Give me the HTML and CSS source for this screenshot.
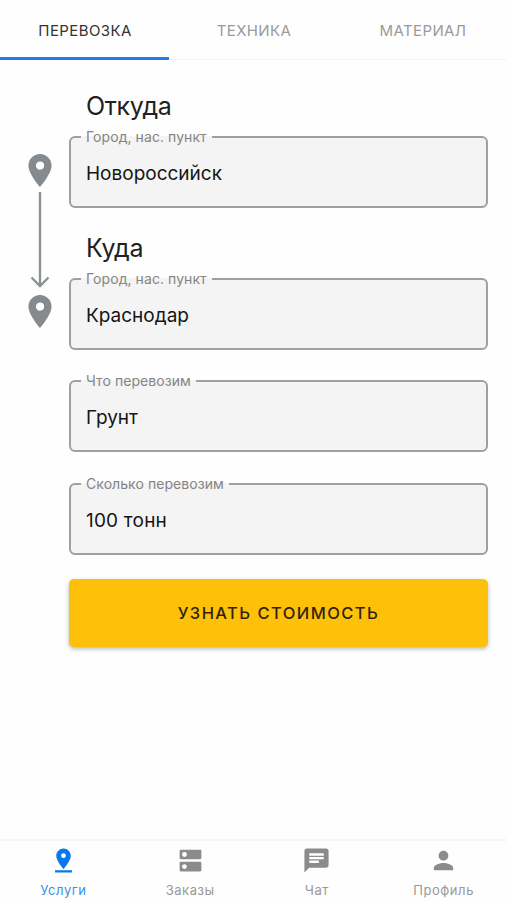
FILE: index.html
```html
<!DOCTYPE html>
<html lang="ru">
<head>
<meta charset="utf-8">
<title>Перевозка</title>
<link rel="stylesheet" href="styles.css">
</head>
<body>
<nav class="tabs">
  <a class="tab tab-active">ПЕРЕВОЗКА</a>
  <a class="tab">ТЕХНИКА</a>
  <a class="tab">МАТЕРИАЛ</a>
</nav>
<main class="content">
  <div class="rail">
    <svg class="pin" viewBox="5 2 14 20"><path fill-rule="evenodd" d="M12 2C8.13 2 5 5.13 5 9c0 5.25 7 13 7 13s7-7.75 7-13c0-3.87-3.13-7-7-7zm0 9.5a2.5 2.5 0 1 1 0-5 2.500 2.500 0 0 1 0 5z"/></svg>
    <svg class="arrow" viewBox="0 0 20 96"><path d="M10 0V94M1.500 85.500L10 94l8.500-8.500"/></svg>
    <svg class="pin" viewBox="5 2 14 20"><path fill-rule="evenodd" d="M12 2C8.13 2 5 5.13 5 9c0 5.25 7 13 7 13s7-7.75 7-13c0-3.87-3.13-7-7-7zm0 9.5a2.5 2.5 0 1 1 0-5 2.500 2.500 0 0 1 0 5z"/></svg>
  </div>
  <form class="form">
    <h2 class="heading">Откуда</h2>
    <fieldset class="field"><legend>Город, нас. пункт</legend><span class="value">Новороссийск</span></fieldset>
    <h2 class="heading heading-to">Куда</h2>
    <fieldset class="field"><legend>Город, нас. пункт</legend><span class="value">Краснодар</span></fieldset>
    <fieldset class="field spaced"><legend>Что перевозим</legend><span class="value">Грунт</span></fieldset>
    <fieldset class="field spaced"><legend>Сколько перевозим</legend><span class="value value-num">100 тонн</span></fieldset>
    <button class="submit" type="button">УЗНАТЬ СТОИМОСТЬ</button>
  </form>
</main>
<nav class="bottom">
  <a class="item item-active">
    <svg viewBox="0 0 24 24"><path fill-rule="evenodd" d="M18 8c0-3.310-2.690-6-6-6S6 4.690 6 8c0 4.500 6 11 6 11s6-6.500 6-11zm-8 0a2 2 0 1 1 4 0 2 2 0 0 1-4 0zM5 20v2h14v-2H5z"/></svg>
    <span>Услуги</span>
  </a>
  <a class="item">
    <svg viewBox="0 0 24 24"><path fill-rule="evenodd" d="M20 13H4c-.550 0-1 .450-1 1v6c0 .550.450 1 1 1h16c.550 0 1-.450 1-1v-6c0-.550-.450-1-1-1zM7 19a2 2 0 1 1 0-4 2 2 0 0 1 0 4zM20 3H4c-.550 0-1 .450-1 1v6c0 .550.450 1 1 1h16c.550 0 1-.450 1-1V4c0-.550-.450-1-1-1zM7 9a2 2 0 1 1 0-4 2 2 0 0 1 0 4z"/></svg>
    <span>Заказы</span>
  </a>
  <a class="item">
    <svg viewBox="0 0 24 24"><path fill-rule="evenodd" d="M20 2H4c-1.100 0-1.990.900-1.990 2L2 22l4-4h14c1.100 0 2-.900 2-2V4c0-1.100-.900-2-2-2zM6 9h12v2H6V9zm8 5H6v-2h8v2zm4-6H6V6h12v2z"/></svg>
    <span>Чат</span>
  </a>
  <a class="item">
    <svg viewBox="0 0 24 24"><path d="M12 12c2.210 0 4-1.790 4-4s-1.790-4-4-4-4 1.790-4 4 1.790 4 4 4zm0 2c-2.670 0-8 1.340-8 4v2h16v-2c0-2.660-5.330-4-8-4z"/></svg>
    <span>Профиль</span>
  </a>
</nav>
</body>
</html>
```
FILE: styles.css
```css
* { box-sizing: border-box; }
body {
  margin: 0;
  height: 900px;
  display: flex;
  flex-direction: column;
  background: #fefefe;
  font-family: Inter, "Liberation Sans", sans-serif;
  color: #212121;
  overflow: hidden;
}
svg { display: block; }
.tabs { display: grid; grid-template-columns: repeat(3, 1fr); height: 60px; }
.tab {
  display: flex;
  align-items: center;
  justify-content: center;
  padding: 1px 0 0 1px;
  border-bottom: 1px solid #f5f5f5;
  font-size: 15px;
  letter-spacing: .4px;
  color: #9a9a9a;
  white-space: nowrap;
}
.tab-active { color: #333; border-bottom: 3px solid #1f7cec; padding-top: 3px; }
.content { flex: 1; display: grid; grid-template-columns: 69px 419px; align-items: start; }
.rail { display: flex; flex-direction: column; align-items: center; padding: 94px 0 0 10px; }
.pin { width: 24px; height: 33px; fill: #858a8e; }
.arrow { width: 20px; height: 96px; margin: 5px 0 7px; fill: none; stroke: #8b9093; stroke-width: 2.3; }
.form { display: flex; flex-direction: column; padding-top: 31px; }
.heading { margin: 0 0 8px 17px; font-size: 25px; line-height: 30px; font-weight: 400; letter-spacing: -.3px; }
.heading-to { margin-top: 25px; }
.field {
  margin: 0;
  min-width: 0;
  height: 79px;
  padding: 0 15px 0 10px;
  border: 2px solid #a0a0a0;
  border-radius: 6px;
  background: #f4f4f4;
}
.field legend { height: 16px; padding: 0 5px; font-size: 14px; line-height: 15px; letter-spacing: .07px; color: #858585; white-space: nowrap; }
.value { display: block; margin: 16px 0 0 5px; font-size: 19px; line-height: 26px; color: #151515; }
.value-num { letter-spacing: .2px; }
.spaced { margin-top: 23px; }
.spaced + .spaced { margin-top: 24px; }
.submit {
  height: 68px;
  margin-top: 24px;
  border: 0;
  border-radius: 5px;
  background: #fec109;
  box-shadow: 0 2px 4px rgba(0, 0, 0, .28);
  font: 500 16.5px/20px Inter, sans-serif;
  letter-spacing: 1.45px;
  color: #33220b;
}
.bottom { display: grid; grid-template-columns: repeat(4, 1fr); height: 61px; border-top: 2px solid #f6f6f6; }
.item { display: flex; flex-direction: column; align-items: center; padding-top: 5px; font-size: 13px; line-height: 18px; letter-spacing: .55px; color: #999; }
.item svg { width: 29px; height: 29px; margin: 0 0 6px; fill: #8b8b8b; }
.item-active { color: #3c8eea; }
.item-active svg { fill: #0878ee; }
```
